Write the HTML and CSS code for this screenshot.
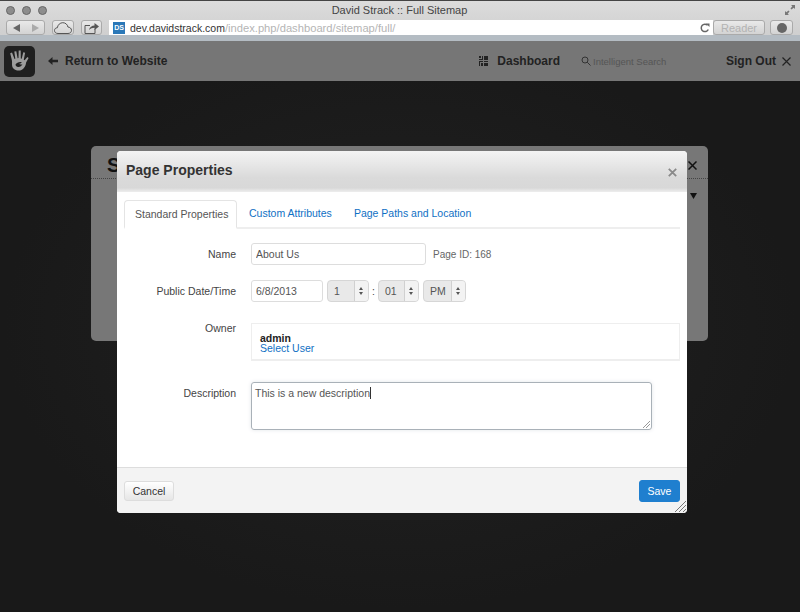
FILE: index.html
```html
<!DOCTYPE html>
<html>
<head>
	<title>David Strack :: Full Sitemap</title>
	<link rel="stylesheet" href="styles.css">
</head>
<body>
	<div class="browser">
		<div class="titlebar">
			<div class="lights"><span></span><span></span><span></span></div>
			<div class="window-title">David Strack :: Full Sitemap</div>
			<svg class="fullscreen" width="10" height="10" viewBox="0 0 10 10"><path d="M6 0h4v4L8.700 2.700 6.500 4.500 5.500 3.500 7.300 1.300zM4 10H0V6l1.300 1.300 2.200-1.800 1 1-1.800 2.200z" fill="#777"/></svg>
		</div>
		<div class="toolbar">
			<div class="tool-btn nav-btn">
				<svg width="8" height="8" viewBox="0 0 8 8"><path d="M7 0v8L0 4z" fill="#666"/></svg>
				<svg width="8" height="8" viewBox="0 0 8 8"><path d="M1 0v8l7-4z" fill="#aaa"/></svg>
			</div>
			<div class="tool-btn cloud-btn">
				<svg width="18" height="12" viewBox="0 0 18 12"><path d="M4 11.500C1.800 11.500.5 10.200.5 8.500S1.800 5.700 3.300 5.800C3.800 2.800 6 .7 8.800.7c2.700 0 4.700 1.800 5.100 4.300 1.900.2 3.600 1.400 3.600 3.300 0 1.800-1.400 3.200-3.500 3.200z" fill="none" stroke="#555" stroke-width="1"/></svg>
			</div>
			<div class="tool-btn share-btn">
				<svg width="15" height="12" viewBox="0 0 15 12"><path d="M1 3.500h5M1 3.500v8h10V7" fill="none" stroke="#555"/><path d="M5 8c.5-3 3-4.500 5.500-4.500V1L15 4.500 10.500 8V5.700C8.500 5.700 6.500 6.500 5 8z" fill="#555"/></svg>
			</div>
			<div class="address">
				<span class="favicon">DS</span>
				<span class="host">dev.davidstrack.com</span><span class="path">/index.php/dashboard/sitemap/full/</span>
				<svg class="reload" width="10" height="10" viewBox="0 0 10 10"><path d="M8.300 6.500A3.700 3.700 0 1 1 7.600 2.300" fill="none" stroke="#666" stroke-width="1.500"/><path d="M6 0.500h3.500V4z" fill="#666"/></svg>
			</div>
			<div class="tool-btn reader-btn">Reader</div>
			<div class="tool-btn download-btn"><span class="download-dot"></span></div>
		</div>
	</div>

	<div class="page">
		<div class="cms-bar">
			<div class="cms-logo">
				<svg width="24" height="24" viewBox="0 0 24 24"><path d="M4 3.500l2.500 6.500 .8-.3L6.300 2.500l2-.3 1.300 7 .9-.1L10.700 1.500h2l.1 8 .9.2 1.600-6.500 1.800.5-1.300 7 .8.600 2.800-3.300 1.200 1.100-2.500 4.300C17.600 17.900 14.800 21.500 10.500 21.500 6.500 21.500 4 19 4 15.500 4 13.700 4.200 12.500 3.700 10.500L2.200 4.300z" fill="#9c9c9c"/><path d="M7.500 15.500c1-1.900 4-3 6.300-2.300-1 1.100-2 1.700-3 1.600 1.500.8 3 .8 3.700.1-.8 2-2.600 3.200-4.400 3-1.400-.1-2.500-1.100-2.600-2.400z" fill="#1f1f1f"/></svg>
			</div>
			<a class="cms-link return-link">
				<svg width="10" height="8" viewBox="0 0 10 8"><path d="M0 4L4.500 0v2.700H10v2.600H4.500V8z" fill="#222"/></svg>
				Return to Website
			</a>
			<a class="cms-link dash-link">
				<svg width="9" height="10" viewBox="0 0 9 10"><path d="M0 0h2v2H0zM3 0h1v4H0V3h3zM5 0h4v4H5zM0 5h4v1H1v4H0zM2 7h2v3H2zM5 5h4v1H5zM5 7h4v3H5z" fill="#222"/></svg>
				Dashboard
			</a>
			<div class="cms-search">
				<svg width="10" height="10" viewBox="0 0 10 10"><circle cx="4" cy="4" r="3" fill="none" stroke="#333"/><path d="M6.200 6.200L9.500 9.500" stroke="#333"/></svg>
				Intelligent Search
			</div>
			<a class="cms-link signout-link">
				Sign Out
				<svg width="9" height="9" viewBox="0 0 9 9"><path d="M.5.500l8 8M8.500.500l-8 8" stroke="#222" stroke-width="1.200"/></svg>
			</a>
		</div>

		<div class="back-card">
			<div class="back-head">
				<span class="back-title">S</span>
				<svg width="9" height="9" viewBox="0 0 9 9"><path d="M.5.500l8 8M8.500.500l-8 8" stroke="#111" stroke-width="1.500"/></svg>
			</div>
			<div class="back-arrow"><svg width="7" height="6" viewBox="0 0 7 6"><path d="M0 0h7L3.500 6z" fill="#111"/></svg></div>
		</div>
	</div>

	<div class="modal">
		<div class="modal-head">
			<h3>Page Properties</h3>
			<svg class="modal-close" width="9" height="9" viewBox="0 0 9 9"><path d="M.8.800l7.400 7.400M8.200.800L.8 8.200" stroke="#8a8a8a" stroke-width="1.800"/></svg>
		</div>
		<div class="modal-body">
			<ul class="tabs">
				<li class="tab active">Standard Properties</li>
				<li class="tab">Custom Attributes</li>
				<li class="tab">Page Paths and Location</li>
			</ul>
			<form class="props">
				<div class="row row-name">
					<label>Name</label>
					<div class="controls">
						<input class="field name-field" type="text" value="About Us">
						<span class="page-id">Page ID: 168</span>
					</div>
				</div>
				<div class="row row-date">
					<label>Public Date/Time</label>
					<div class="controls">
						<input class="field date-field" type="text" value="6/8/2013">
						<div class="picker hour"><span>1</span><i class="arrows"></i></div>
						<span class="colon">:</span>
						<div class="picker minute"><span>01</span><i class="arrows"></i></div>
						<div class="picker ampm"><span>PM</span><i class="arrows"></i></div>
					</div>
				</div>
				<div class="row row-owner">
					<label>Owner</label>
					<div class="owner-box">
						<strong>admin</strong>
						<a>Select User</a>
					</div>
				</div>
				<div class="row">
					<label>Description</label>
					<div class="desc-box">This is a new description<span class="caret"></span>
						<svg class="grip" width="8" height="8" viewBox="0 0 8 8"><path d="M1 8l7-7M4 8l4-4" stroke="#999"/></svg>
					</div>
				</div>
			</form>
		</div>
		<div class="modal-foot">
			<button class="btn" type="button">Cancel</button>
			<button class="btn btn-save" type="button">Save</button>
			<svg class="corner" width="11" height="11" viewBox="0 0 11 11"><path d="M0 11L11 0M4 11l7-7M8 11l3-3" stroke="#777"/></svg>
		</div>
	</div>
</body>
</html>
```

FILE: styles.css
```css
* {
    box-sizing: border-box;
}

html, body {
    margin: 0;
    height: 612px;
    overflow: hidden;
}

body {
    position: relative;
    font-family: "Liberation Sans", Arial, sans-serif;
    font-size: 10.5px;
    color: #444;
    background-color: #191919;
}

/* browser chrome */
.browser {
    height: 41px;
    border-top: 1px solid #444;
    background: linear-gradient(#dcdcdc, #cfcfcf 85%, #b4bcc3 85%);
}

.titlebar {
    display: flex;
    align-items: center;
    height: 18px;
    padding: 0 5px 0 6px;
}

.lights {
    display: flex;
    gap: 7px;
    width: 60px;
}

.lights span {
    width: 9px;
    height: 9px;
    border-radius: 50%;
    background: #8d8d8d;
    border: 1px solid #666;
}

.window-title {
    flex: 1;
    padding-right: 52px;
    text-align: center;
    font-size: 11px;
    color: #444;
}

.toolbar {
    display: flex;
    align-items: flex-start;
    padding: 1px 6px 0;
}

.tool-btn {
    display: flex;
    align-items: center;
    justify-content: center;
    height: 15px;
    border: 1px solid #aaa;
    border-radius: 3px;
    background: linear-gradient(#e9e9e9, #d3d3d3);
}

.nav-btn {
    width: 39px;
    gap: 10px;
}

.cloud-btn {
    width: 22px;
    margin-left: 7px;
}

.share-btn {
    width: 21px;
    margin-left: 7px;
}

.address {
    display: flex;
    align-items: center;
    width: 604px;
    height: 15px;
    margin-left: 7px;
    padding-left: 4px;
    background: #fff;
    white-space: nowrap;
}

.favicon {
    width: 12px;
    height: 12px;
    margin-right: 5px;
    background: #2a78b8;
    color: #fff;
    font-size: 7px;
    font-weight: bold;
    line-height: 12px;
    text-align: center;
}

.host {
    color: #333;
    font-size: 10.5px;
}

.path {
    color: #b5b5b5;
    font-size: 11.2px;
}

.reload {
    margin-left: auto;
    margin-right: 3px;
}

.reader-btn {
    width: 52px;
    margin-left: 0;
    font-size: 11px;
    color: #b3b3b3;
}

.download-btn {
    width: 23px;
    margin-left: 5px;
}

.download-dot {
    width: 10px;
    height: 10px;
    border-radius: 50%;
    background: #666;
}

/* page behind the dialog */
.page {
    height: 571px;
    background: radial-gradient(ellipse at center, #222 0%, #191919 70%);
}

.cms-bar {
    display: flex;
    align-items: center;
    height: 40px;
    padding-left: 4px;
    background: #767676;
    color: #222;
}

.cms-logo {
    display: flex;
    align-items: center;
    justify-content: center;
    width: 31px;
    height: 31px;
    border-radius: 5px;
    background: #1f1f1f;
}

.cms-link {
    display: flex;
    align-items: center;
    font-size: 12px;
    font-weight: bold;
}

.return-link {
    gap: 7px;
    margin-left: 13px;
}

.dash-link {
    gap: 9px;
    margin-left: auto;
}

.cms-search {
    display: flex;
    align-items: center;
    gap: 2px;
    width: 145px;
    margin-left: 21px;
    font-size: 9.500px;
    color: #555;
}

.signout-link {
    gap: 6px;
    margin-right: 9px;
}

.back-card {
    width: 617px;
    height: 195px;
    margin: 65px 0 0 91px;
    border-radius: 5px;
    background: #777;
}

.back-head {
    display: flex;
    align-items: center;
    justify-content: space-between;
    height: 33px;
    padding: 6px 11px 0 16px;
    border-bottom: 1px dotted #444;
}

.back-title {
    font-size: 20px;
    font-weight: bold;
    color: #111;
}

.back-arrow {
    padding: 10px 11px 0 0;
    text-align: right;
}

/* dialog */
.modal {
    position: absolute;
    left: 117px;
    top: 151px;
    width: 570px;
    height: 362px;
    display: flex;
    flex-direction: column;
    border-radius: 4px;
    background: #fff;
    overflow: hidden;
}

.modal-head {
    display: flex;
    align-items: center;
    justify-content: space-between;
    height: 41px;
    padding: 0 10px 0 9px;
    background: linear-gradient(#f4f4f4, #dadada 65%, #d8d8d8 90%, #eeeeee);
}

.modal-head h3 {
    margin: 0 0 4px;
    font-size: 14px;
    color: #333;
}

.modal-close {
    margin-top: 2px;
}

.modal-body {
    flex: 1;
    padding: 8px 7px 0;
}

.tabs {
    display: flex;
    height: 29px;
    margin: 0;
    padding: 0;
    list-style: none;
    border-bottom: 2px solid #eee;
}

.tab {
    height: 29px;
    padding: 0 11px;
    margin-right: 0;
    line-height: 27px;
    color: #0f70c4;
}

.tab.active {
    width: 113px;
    margin-right: 1px;
    padding: 0 10px;
    border: 1px solid #e4e4e4;
    border-bottom: 2px solid #fff;
    border-radius: 4px 4px 0 0;
    color: #555;
    white-space: nowrap;
}

.props {
    padding-top: 14px;
}

.row {
    display: flex;
    margin-bottom: 21px;
}

.row-name {
    margin-bottom: 15px;
}

.row label {
    width: 112px;
    margin-right: 15px;
    line-height: 22px;
    text-align: right;
}

.row-owner label {
    line-height: 11px;
}

.controls {
    display: flex;
    align-items: center;
}

.field {
    height: 22px;
    padding: 0 4px;
    border: 1px solid #ddd;
    border-radius: 3px;
    background: #fff;
    font-family: inherit;
    font-size: 10.5px;
    color: #555;
}

.name-field {
    width: 175px;
}

.date-field {
    width: 72px;
}

.page-id {
    margin-left: 7px;
    font-size: 10px;
    color: #666;
}

.picker {
    display: flex;
    height: 22px;
    border: 1px solid #d6d6d6;
    border-radius: 4px;
    background: #e9e9e9;
    color: #555;
    line-height: 20px;
}

.picker span {
    flex: 1;
    padding-left: 6px;
}

.picker .arrows {
    position: relative;
    width: 14px;
    border-left: 1px solid #d0d0d0;
    background: #f3f3f3;
    border-radius: 0 3px 3px 0;
}

.picker .arrows::before,
.picker .arrows::after {
    content: "";
    position: absolute;
    left: 4px;
    border-left: 2.500px solid transparent;
    border-right: 2.500px solid transparent;
}

.picker .arrows::before {
    top: 6px;
    border-bottom: 3px solid #555;
}

.picker .arrows::after {
    top: 11px;
    border-top: 3px solid #555;
}

.hour {
    width: 42px;
    margin-left: 4px;
}

.colon {
    width: 9px;
    text-align: center;
}

.minute {
    width: 41px;
}

.ampm {
    width: 43px;
    margin-left: 4px;
}

.owner-box {
    display: flex;
    flex-direction: column;
    width: 429px;
    height: 38px;
    padding-top: 9px;
    border: 1px solid #eee;
    border-bottom-width: 2px;
    padding-left: 8px;
    line-height: 10px;
}

.owner-box strong {
    color: #222;
}

.owner-box a {
    color: #0f70c4;
}

.desc-box {
    position: relative;
    width: 401px;
    height: 48px;
    padding: 3px 3px;
    border: 1px solid #a9b1b8;
    border-radius: 3px;
    box-shadow: 0 0 4px #e3e6e9;
    line-height: 14px;
    color: #555;
}

.caret {
    display: inline-block;
    width: 1px;
    height: 12px;
    vertical-align: -2px;
    background: #333;
}

.grip {
    position: absolute;
    right: 1px;
    bottom: 1px;
}

.modal-foot {
    position: relative;
    display: flex;
    align-items: center;
    justify-content: space-between;
    height: 46px;
    padding: 0 7px;
    border-top: 1px solid #ddd;
    background: #f3f3f3;
}

.btn {
    width: 50px;
    height: 20px;
    padding: 0;
    border: 1px solid #ddd;
    border-radius: 3px;
    background: linear-gradient(#fff, #e6e6e6);
    font-family: inherit;
    font-size: 10.5px;
    color: #333;
}

.btn-save {
    width: 41px;
    height: 22px;
    border-color: #1f7fcf;
    background: #1f7fcf;
    color: #fff;
}

.corner {
    position: absolute;
    right: 1px;
    bottom: 1px;
}
```
